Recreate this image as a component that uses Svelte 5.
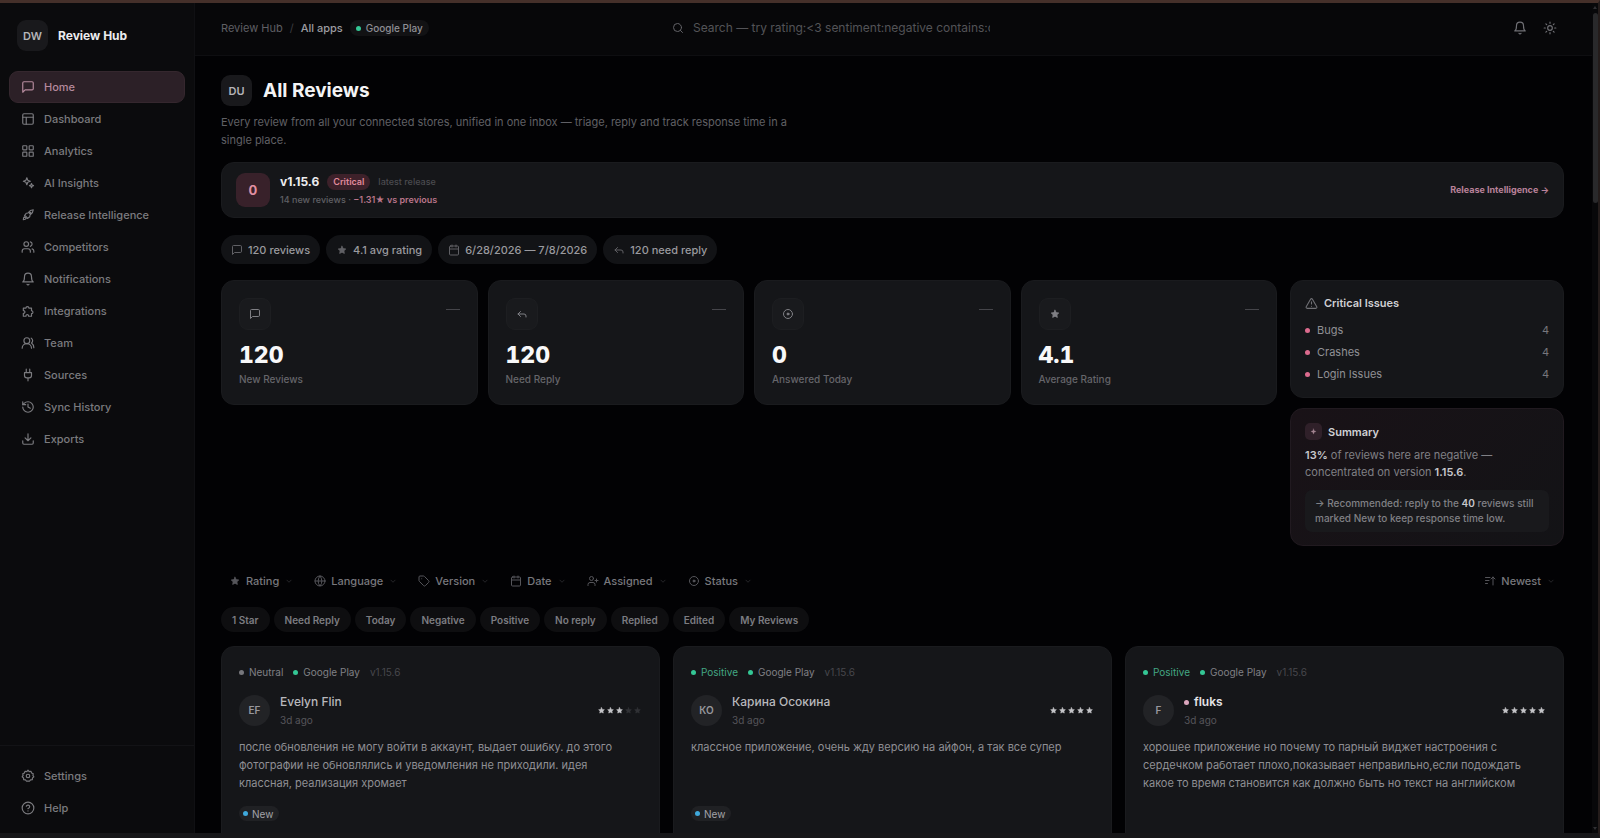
<script>
  const icons = {
    message: '<path d="M21 15a2 2 0 0 1-2 2H7l-4 4V5a2 2 0 0 1 2-2h14a2 2 0 0 1 2 2z"/>',
    layout: '<rect width="18" height="18" x="3" y="3" rx="2"/><path d="M3 9h18M9 9v12"/>',
    grid: '<rect width="7" height="7" x="3" y="3" rx="1"/><rect width="7" height="7" x="14" y="3" rx="1"/><rect width="7" height="7" x="14" y="14" rx="1"/><rect width="7" height="7" x="3" y="14" rx="1"/>',
    sparkles: '<path d="M10 3l1.6 4.4L16 9l-4.4 1.6L10 15l-1.6-4.4L4 9l4.4-1.6z"/><path d="M18 13l1 2.5 2.5 1-2.5 1-1 2.5-1-2.5-2.5-1 2.5-1z"/>',
    rocket: '<path d="M4 20c0-2 .5-4 2-5l3 3c-1 1.5-3 2-5 2z"/><path d="M8 14l-2-1 3-4 3-.5C15 4.5 18 3 21 3c0 3-1.5 6-5.5 9l-.5 3-4 3-1-2z"/><circle cx="15.5" cy="8.5" r="1.2"/>',
    users: '<path d="M16 21v-2a4 4 0 0 0-4-4H6a4 4 0 0 0-4 4v2"/><circle cx="9" cy="7" r="4"/><path d="M22 21v-2a4 4 0 0 0-3-3.87M16 3.13a4 4 0 0 1 0 7.75"/>',
    team: '<path d="M18 21a8 8 0 0 0-16 0"/><circle cx="10" cy="8" r="5"/><path d="M22 20c0-3.37-2-6.5-4-8a5 5 0 0 0-.45-8.3"/>',
    bell: '<path d="M6 8a6 6 0 0 1 12 0c0 7 3 9 3 9H3s3-2 3-9M10.3 21a1.94 1.94 0 0 0 3.4 0"/>',
    puzzle: '<path d="M4 7h4.5a2.5 2.5 0 1 1 5 0H18v4.5a2.5 2.5 0 1 1 0 5V21h-5a2.3 2.3 0 1 0-4.5 0H4v-5a2.3 2.3 0 1 0 0-4.5z"/>',
    plug: '<path d="M12 22v-5M9 8V2M15 8V2M18 8v5a4 4 0 0 1-4 4h-4a4 4 0 0 1-4-4V8z"/>',
    history: '<path d="M3 12a9 9 0 1 0 9-9 9.75 9.75 0 0 0-6.74 2.74L3 8"/><path d="M3 3v5h5M12 7v5l4 2"/>',
    download: '<path d="M21 15v4a2 2 0 0 1-2 2H5a2 2 0 0 1-2-2v-4M7 10l5 5 5-5M12 15V3"/>',
    gear: '<path d="M12 2l2 2.5 3-.6 1.2 2.9L21 8l-.6 3L22 13.5l-2.4 1.9-.2 3.1-3.1.2L14.5 21 12 20.5 9.5 21l-1.8-2.3-3.1-.2-.2-3.1L2 13.5 3.6 11 3 8l2.8-1.2L7 3.9l3 .6z"/><circle cx="12" cy="12" r="3"/>',
    help: '<circle cx="12" cy="12" r="10"/><path d="M9.09 9a3 3 0 0 1 5.83 1c0 2-3 3-3 3M12 17h.01"/>',
    search: '<circle cx="11" cy="11" r="8"/><path d="m21 21-4.3-4.3"/>',
    sun: '<circle cx="12" cy="12" r="4"/><path d="M12 2v2M12 20v2M4.93 4.93l1.41 1.41M17.66 17.66l1.41 1.41M2 12h2M20 12h2M6.34 17.66l-1.41 1.41M19.07 4.93l-1.41 1.41"/>',
    star: '<path fill="currentColor" transform="translate(2.9 2.9) scale(.76)" d="M12 2l3.09 6.26L22 9.27l-5 4.87 1.18 6.88L12 17.77l-6.18 3.25L7 14.14 2 9.27l6.91-1.01z"/>',
    calendar: '<rect width="18" height="18" x="3" y="4" rx="2"/><path d="M16 2v4M8 2v4M3 10h18"/>',
    reply: '<path d="M9 17l-5-5 5-5"/><path d="M20 18v-2a4 4 0 0 0-4-4H4"/>',
    target: '<circle cx="12" cy="12" r="9"/><circle cx="12" cy="12" r="2" fill="currentColor"/>',
    warning: '<path d="m21.73 18-8-14a2 2 0 0 0-3.48 0l-8 14A2 2 0 0 0 4 21h16a2 2 0 0 0 1.73-3zM12 9v4M12 17h.01"/>',
    globe: '<circle cx="12" cy="12" r="10"/><path d="M12 2a15 15 0 0 0 0 20 15 15 0 0 0 0-20M2 12h20"/>',
    tag: '<path d="M12.6 2.6A2 2 0 0 0 11.2 2H4a2 2 0 0 0-2 2v7.2a2 2 0 0 0 .6 1.4l8.7 8.7a2.4 2.4 0 0 0 3.4 0l6.6-6.6a2.4 2.4 0 0 0 0-3.4z"/><path d="M7.5 7.5h.01"/>',
    assign: '<path d="M16 21v-2a4 4 0 0 0-4-4H6a4 4 0 0 0-4 4v2"/><circle cx="9" cy="7" r="4"/><path d="M19 8v6M22 11h-6"/>',
    sort: '<path d="M3 5h9M3 11h7M3 17h4M18 20V4M14 8l4-4 4 4"/>',
    chevron: '<path d="m7 10 5 5 5-5"/>',
    spark: '<path fill="currentColor" stroke-width="1" d="M12 3l2.5 6.5L21 12l-6.5 2.5L12 21l-2.5-6.5L3 12l6.5-2.5z"/>',
  };

  const nav = [
    { label: "Home", icon: "message" },
    { label: "Dashboard", icon: "layout" },
    { label: "Analytics", icon: "grid" },
    { label: "AI Insights", icon: "sparkles" },
    { label: "Release Intelligence", icon: "rocket" },
    { label: "Competitors", icon: "users" },
    { label: "Notifications", icon: "bell" },
    { label: "Integrations", icon: "puzzle" },
    { label: "Team", icon: "team" },
    { label: "Sources", icon: "plug" },
    { label: "Sync History", icon: "history" },
    { label: "Exports", icon: "download" },
  ];

  const footerNav = [
    { label: "Settings", icon: "gear" },
    { label: "Help", icon: "help" },
  ];

  const facts = [
    { label: "120 reviews", icon: "message" },
    { label: "4.1 avg rating", icon: "star" },
    { label: "6/28/2026 — 7/8/2026", icon: "calendar" },
    { label: "120 need reply", icon: "reply" },
  ];

  const stats = [
    { value: "120", label: "New Reviews", icon: "message" },
    { value: "120", label: "Need Reply", icon: "reply" },
    { value: "0", label: "Answered Today", icon: "target" },
    { value: "4.1", label: "Average Rating", icon: "star" },
  ];

  const issues = [
    { label: "Bugs", count: 4 },
    { label: "Crashes", count: 4 },
    { label: "Login Issues", count: 4 },
  ];

  const filters = [
    { label: "Rating", icon: "star" },
    { label: "Language", icon: "globe" },
    { label: "Version", icon: "tag" },
    { label: "Date", icon: "calendar" },
    { label: "Assigned", icon: "assign" },
    { label: "Status", icon: "target" },
  ];

  const quickFilters = [
    "1 Star",
    "Need Reply",
    "Today",
    "Negative",
    "Positive",
    "No reply",
    "Replied",
    "Edited",
    "My Reviews",
  ];

  const reviews = [
    {
      sentiment: "Neutral",
      initials: "EF",
      author: "Evelyn Flin",
      rating: 3,
      text: "после обновления не могу войти в аккаунт, выдает ошибку. до этого фотографии не обновлялись и уведомления не приходили. идея классная, реализация хромает",
      status: "New",
    },
    {
      sentiment: "Positive",
      initials: "КО",
      author: "Карина Осокина",
      rating: 5,
      text: "классное приложение, очень жду версию на айфон, а так все супер",
      status: "New",
    },
    {
      sentiment: "Positive",
      initials: "F",
      author: "fluks",
      rating: 5,
      unread: true,
      text: "хорошее приложение но почему то парный виджет настроения с сердечком работает плохо,показывает неправильно,если подождать какое то время становится как должно быть но текст на английском",
    },
  ];

  let active = $state("Home");
  let query = $state("");
</script>

{#snippet icon(name, size = 14)}
  <svg
    width={size}
    height={size}
    viewBox="0 0 24 24"
    fill="none"
    stroke="currentColor"
    stroke-width="2"
    stroke-linecap="round"
    stroke-linejoin="round"
    aria-hidden="true"
  >
    {@html icons[name]}
  </svg>
{/snippet}

{#snippet navLink(item)}
  <a
    href="#{item.icon}"
    class="nav-link"
    class:active={active === item.label}
    onclick={() => (active = item.label)}
  >
    {@render icon(item.icon)}
    {item.label}
  </a>
{/snippet}

<div class="app">
  <aside class="sidebar">
    <div class="brand">
      <span class="tile">DW</span>
      <strong>Review Hub</strong>
    </div>
    <nav class="nav">
      {#each nav as item}
        {@render navLink(item)}
      {/each}
    </nav>
    <nav class="nav nav-footer">
      {#each footerNav as item}
        {@render navLink(item)}
      {/each}
    </nav>
  </aside>

  <div class="page">
    <header class="topbar">
      <div class="crumbs">
        <a href="#hub">Review Hub</a>
        <span class="slash">/</span>
        <span class="current">All apps</span>
        <span class="store"><i class="dot green"></i>Google Play</span>
      </div>
      <label class="search">
        {@render icon("search", 12)}
        <input
          type="text"
          aria-label="Search reviews"
          placeholder="Search — try rating:<3 sentiment:negative contains:crash"
          bind:value={query}
        />
      </label>
      <div class="tools">
        <button type="button" aria-label="Notifications">{@render icon("bell")}</button>
        <button type="button" aria-label="Theme">{@render icon("sun")}</button>
      </div>
    </header>

    <main>
      <div class="title">
        <span class="tile">DU</span>
        <h1>All Reviews</h1>
      </div>
      <p class="lead">
        Every review from all your connected stores, unified in one inbox — triage, reply and track
        response time in a single place.
      </p>

      <section class="card release">
        <span class="score">0</span>
        <div class="release-info">
          <div class="release-head">
            <strong>v1.15.6</strong>
            <span class="badge">Critical</span>
            <span class="faint">latest release</span>
          </div>
          <div class="release-sub">14 new reviews · <b>−1.31★ vs previous</b></div>
        </div>
        <a href="#release">Release Intelligence →</a>
      </section>

      <div class="facts">
        {#each facts as fact}
          <span class="fact">{@render icon(fact.icon, 12)}{fact.label}</span>
        {/each}
      </div>

      <div class="overview">
        <div class="stats">
          {#each stats as stat}
            <section class="card stat">
              <div class="stat-top">
                <span class="stat-icon">{@render icon(stat.icon, 12)}</span>
                <span class="trend"></span>
              </div>
              <div class="value">{stat.value}</div>
              <div class="stat-label">{stat.label}</div>
            </section>
          {/each}
        </div>

        <div class="side">
          <section class="card panel">
            <h2>{@render icon("warning", 13)}Critical Issues</h2>
            <ul>
              {#each issues as issue}
                <li><i class="dot pink"></i>{issue.label}<span>{issue.count}</span></li>
              {/each}
            </ul>
          </section>

          <section class="card panel summary">
            <h2><span class="spark">{@render icon("spark", 7)}</span>Summary</h2>
            <p><b>13%</b> of reviews here are negative — concentrated on version <b>1.15.6</b>.</p>
            <div class="advice">
              → Recommended: reply to the <b>40</b> reviews still marked New to keep response time low.
            </div>
          </section>
        </div>
      </div>

      <div class="filters">
        {#each filters as filter}
          <button type="button" class="filter">
            {@render icon(filter.icon, 12)}
            {filter.label}
            {@render icon("chevron", 10)}
          </button>
        {/each}
        <button type="button" class="filter sort">
          {@render icon("sort", 12)}
          Newest
          {@render icon("chevron", 10)}
        </button>
      </div>

      <div class="quick">
        {#each quickFilters as label}
          <button type="button">{label}</button>
        {/each}
      </div>

      <div class="reviews">
        {#each reviews as review}
          <article class="card review">
            <div class="meta">
              <span class="sentiment" class:positive={review.sentiment === "Positive"}>
                <i class="dot"></i>{review.sentiment}
              </span>
              <span class="source"><i class="dot green"></i>Google Play</span>
              <span class="version">v1.15.6</span>
            </div>
            <div class="author">
              <span class="avatar">{review.initials}</span>
              <div class="who">
                <h3 class:unread={review.unread}>
                  {#if review.unread}<i class="dot rose"></i>{/if}{review.author}
                </h3>
                <time>3d ago</time>
              </div>
              <div class="stars" role="img" aria-label="{review.rating} out of 5">
                {#each [1, 2, 3, 4, 5] as n}
                  <span class:off={n > review.rating}>{@render icon("star", 9)}</span>
                {/each}
              </div>
            </div>
            <p>{review.text}</p>
            {#if review.status}
              <span class="status"><i class="dot blue"></i>{review.status}</span>
            {/if}
          </article>
        {/each}
      </div>
    </main>
  </div>

  <div class="scroll" aria-hidden="true">
    <span class="arrow"></span>
    <span class="thumb"></span>
    <span class="arrow down"></span>
  </div>
</div>

<style>
  :global(body) {
    margin: 0;
    background: #020204;
  }

  .app {
    display: flex;
    box-sizing: border-box;
    height: 100vh;
    overflow: hidden;
    border-top: 3px solid #45302a;
    border-right: 2px solid #241c1b;
    border-bottom: 5px solid #171719;
    background: #020204;
    color: #a3a3a8;
    font-family: Inter, "Noto Sans", sans-serif;
    font-size: 11px;
    line-height: 16px;
  }

  .app :global(*) {
    box-sizing: border-box;
  }

  svg {
    flex: none;
  }

  a {
    color: inherit;
    text-decoration: none;
  }

  button {
    padding: 0;
    border: 0;
    background: none;
    color: inherit;
    font: inherit;
    cursor: pointer;
  }

  h1,
  h2,
  h3,
  p,
  ul {
    margin: 0;
    padding: 0;
  }

  b,
  strong {
    font-weight: 600;
  }

  .dot {
    flex: none;
    width: 5px;
    height: 5px;
    border-radius: 50%;
    background: #77777c;
  }

  .dot.green,
  .positive .dot {
    background: #34c795;
  }

  .dot.pink {
    background: #dc6b8e;
  }

  .dot.rose {
    background: #dba6bd;
  }

  .dot.blue {
    background: #3fa9dc;
  }

  .tile {
    display: grid;
    place-items: center;
    flex: none;
    width: 31px;
    height: 31px;
    border-radius: 9px;
    background: #19191c;
    color: #b4b4b8;
    font-size: 11px;
    font-weight: 600;
  }

  /* Sidebar */
  .sidebar {
    display: flex;
    flex-direction: column;
    flex: none;
    width: 195px;
    border-right: 1px solid #101013;
    background: #0b0b0d;
  }

  .brand {
    display: flex;
    align-items: center;
    gap: 10px;
    padding: 17px 17px 20px;
    color: #ececee;
    font-size: 12px;
  }

  .brand strong {
    font-weight: 700;
  }

  .nav {
    display: flex;
    flex-direction: column;
    padding: 0 9px;
  }

  .nav-link {
    display: flex;
    align-items: center;
    gap: 9px;
    height: 32px;
    padding: 0 11px;
    border: 1px solid transparent;
    border-radius: 9px;
    color: #7b7b7f;
    font-weight: 500;
  }

  .nav-link.active {
    border-color: #35272e;
    background: #2c2027;
    color: #b58a9d;
  }

  .nav-footer {
    margin-top: auto;
    padding: 14px 9px 9px;
    border-top: 1px solid #131316;
  }

  /* Top bar */
  .page {
    display: flex;
    flex-direction: column;
    flex: 1;
    min-width: 0;
  }

  .topbar {
    display: grid;
    grid-template-columns: 11fr 318px 14fr;
    align-items: center;
    flex: none;
    height: 53px;
    padding: 0 28px 2px 26px;
    border-bottom: 1px solid #0e0e11;
    background: #070709;
  }

  .crumbs {
    display: flex;
    align-items: center;
    gap: 7px;
    color: #5f5f64;
  }

  .slash {
    color: #3c3c40;
  }

  .current {
    color: #9c9ca1;
    font-weight: 500;
  }

  .store {
    display: flex;
    align-items: center;
    gap: 5px;
    padding: 0 6px;
    border-radius: 8px;
    background: #121214;
    color: #8f8f94;
    font-size: 10px;
    font-weight: 500;
  }

  .search {
    display: flex;
    align-items: center;
    gap: 9px;
    color: #626267;
  }

  .search input {
    flex: 1;
    min-width: 0;
    margin: 0;
    padding: 0;
    border: 0;
    outline: 0;
    background: none;
    color: #a3a3a8;
    font: inherit;
    font-size: 12px;
  }

  .search input::placeholder {
    color: #535357;
    opacity: 1;
  }

  .tools {
    display: flex;
    justify-content: flex-end;
    gap: 2px;
    color: #707075;
  }

  .tools button {
    display: grid;
    place-items: center;
    width: 28px;
    height: 28px;
  }

  /* Content */
  main {
    flex: 1;
    min-height: 0;
    overflow: hidden;
    padding: 19px 28px 0 26px;
  }

  .title {
    display: flex;
    align-items: center;
    gap: 11px;
  }

  h1 {
    color: #f4f4f5;
    font-size: 19px;
    font-weight: 700;
    line-height: 28px;
  }

  .lead {
    max-width: 580px;
    margin: 7px 0 13px;
    color: #606065;
    line-height: 18px;
  }

  .card {
    border: 1px solid #1a1b1e;
    border-radius: 13px;
    background: #151619;
  }

  .release {
    display: flex;
    align-items: center;
    gap: 10px;
    height: 56px;
    padding: 0 14px;
  }

  .score {
    display: grid;
    place-items: center;
    width: 34px;
    height: 34px;
    border-radius: 9px;
    background: #38212a;
    color: #e090a2;
    font-size: 13px;
    font-weight: 700;
  }

  .release-info {
    flex: 1;
  }

  .release-head {
    display: flex;
    align-items: center;
    gap: 8px;
    height: 20px;
  }

  .release-head strong {
    color: #ececee;
    font-size: 12px;
    font-weight: 700;
  }

  .badge {
    padding: 0 6px;
    border-radius: 8px;
    background: #3d212a;
    color: #e08a9c;
    font-size: 9px;
    font-weight: 600;
  }

  .faint {
    color: #4b4b50;
    font-size: 9px;
    font-weight: 500;
  }

  .release-sub {
    color: #606065;
    font-size: 9px;
    font-weight: 500;
  }

  .release-sub b {
    color: #b9758a;
    font-weight: 600;
  }

  .release a {
    color: #b9829a;
    font-size: 9px;
    font-weight: 700;
  }

  .facts {
    display: flex;
    gap: 6px;
    margin: 17px 0 16px;
  }

  .fact {
    display: flex;
    align-items: center;
    gap: 5px;
    height: 29px;
    padding: 0 10px;
    border-radius: 15px;
    background: #121316;
    color: #9a9a9f;
    font-weight: 500;
  }

  .fact svg {
    color: #606065;
  }

  .overview {
    display: grid;
    grid-template-columns: 1fr 274px;
    align-items: start;
    gap: 13px;
  }

  .stats {
    display: grid;
    grid-template-columns: repeat(4, 1fr);
    gap: 10px;
  }

  .stat {
    height: 125px;
    padding: 17px;
  }

  .stat-top {
    display: flex;
    justify-content: space-between;
  }

  .stat-icon {
    display: grid;
    place-items: center;
    width: 32px;
    height: 32px;
    border: 1px solid #1d1e21;
    border-radius: 9px;
    background: #191a1d;
    color: #7f7f84;
  }

  .trend {
    width: 14px;
    height: 1px;
    margin-top: 11px;
    background: #45454a;
  }

  .value {
    margin-top: 11px;
    color: #f8f8f9;
    font-size: 23px;
    font-weight: 800;
    font-variant-numeric: tabular-nums;
    line-height: 28px;
  }

  .stat-label {
    margin-top: 2px;
    color: #65656a;
    font-size: 10px;
    font-weight: 500;
  }

  .side {
    display: grid;
    gap: 10px;
  }

  .panel {
    padding: 14px 14px 12px;
  }

  .panel h2 {
    display: flex;
    align-items: center;
    gap: 6px;
    color: #d0d0d4;
    font-size: 11px;
    font-weight: 600;
    line-height: 16px;
  }

  .panel h2 svg {
    color: #707075;
  }

  .panel ul {
    margin-top: 8px;
    list-style: none;
  }

  .panel li {
    display: flex;
    align-items: center;
    gap: 7px;
    height: 22px;
    color: #909095;
  }

  .panel li span {
    margin-left: auto;
    color: #77777c;
  }

  .summary {
    padding-bottom: 13px;
    border-color: #211a20;
    background: linear-gradient(135deg, #191217, #131316);
  }

  .spark {
    display: grid;
    place-items: center;
    width: 17px;
    height: 17px;
    border-radius: 5px;
    background: #2f2029;
  }

  .summary .spark svg {
    color: #a58492;
  }

  .summary p {
    margin: 7px 0 9px;
    color: #808085;
    line-height: 17px;
  }

  .summary b {
    color: #c8c8cc;
  }

  .advice {
    padding: 6px 10px;
    border-radius: 7px;
    background: #19191c;
    color: #808085;
    font-size: 10px;
    font-weight: 500;
    line-height: 15px;
  }

  .filters {
    display: flex;
    gap: 4px;
    margin-top: 22px;
  }

  .filter {
    display: flex;
    align-items: center;
    gap: 5px;
    height: 26px;
    padding: 0 8px;
    color: #78787d;
    font-weight: 500;
  }

  .filter svg {
    color: #55555a;
  }

  .filter svg:last-child {
    color: #2c2c30;
  }

  .sort {
    margin-left: auto;
  }

  .quick {
    display: flex;
    gap: 4px;
    margin: 13px 0 14px;
  }

  .quick button {
    height: 25px;
    padding: 0 11px;
    border-radius: 13px;
    background: #0e0e10;
    color: #7c7c81;
    font-size: 10px;
    font-weight: 600;
  }

  .reviews {
    display: grid;
    grid-template-columns: repeat(3, 1fr);
    gap: 13px;
  }

  .review {
    display: flex;
    flex-direction: column;
    height: 205px;
    padding: 17px;
  }

  .meta {
    display: flex;
    gap: 10px;
    color: #808085;
    font-size: 10px;
  }

  .meta span {
    display: flex;
    align-items: center;
    gap: 5px;
  }

  .meta .positive {
    color: #43a783;
  }

  .meta .version {
    color: #47474c;
  }

  .author {
    display: flex;
    align-items: center;
    gap: 10px;
    margin-top: 12px;
  }

  .avatar {
    display: grid;
    place-items: center;
    width: 31px;
    height: 31px;
    border-radius: 50%;
    background: #222326;
    color: #97979c;
    font-size: 10px;
    font-weight: 600;
  }

  .who {
    flex: 1;
  }

  h3 {
    display: flex;
    align-items: center;
    gap: 5px;
    color: #b8b8bc;
    font-size: 12px;
    font-weight: 500;
    line-height: 20px;
  }

  h3.unread {
    color: #e4e4e7;
    font-weight: 600;
  }

  time {
    display: block;
    color: #55555a;
    font-size: 10px;
  }

  .stars {
    display: flex;
    color: #c4c4c8;
  }

  .stars span {
    display: flex;
  }

  .stars .off {
    color: #303135;
  }

  .review p {
    min-height: 54px;
    margin-top: 10px;
    color: #8f8f94;
    line-height: 18px;
  }

  .status {
    display: flex;
    align-items: center;
    align-self: flex-start;
    gap: 4px;
    height: 15px;
    margin-top: 14px;
    padding: 0 6px 0 4px;
    border-radius: 8px;
    background: #202124;
    color: #a3a3a8;
    font-size: 10px;
  }

  /* Scrollbar */
  .scroll {
    display: flex;
    flex-direction: column;
    align-items: center;
    flex: none;
    width: 6px;
    padding: 3px 0;
    background: #08080a;
  }

  .arrow {
    border: 2px solid transparent;
    border-top: 0;
    border-bottom: 3px solid #303033;
  }

  .arrow.down {
    margin-top: auto;
    transform: rotate(180deg);
  }

  .thumb {
    width: 5px;
    height: 23%;
    margin-top: 4px;
    border-radius: 3px;
    background: #29292b;
  }
</style>
